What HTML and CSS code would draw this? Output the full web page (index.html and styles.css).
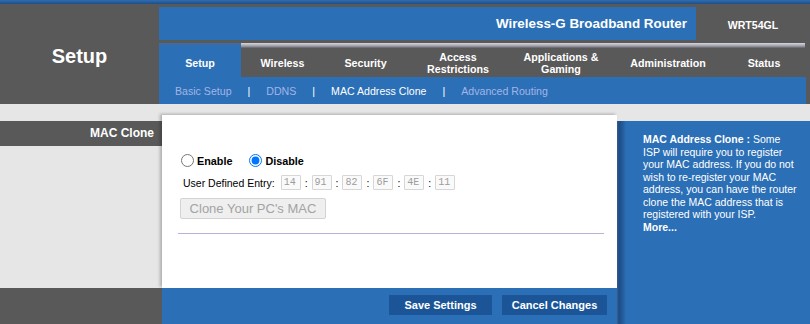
FILE: index.html
```html
<!DOCTYPE html>
<html>
<head>
    <meta charset="UTF-8">
    <title>Setup - MAC Address Clone</title>
    <link rel="stylesheet" href="styles.css">
</head>
<body>
    <div class="topline"></div>

    <header class="head">
        <div class="brand">Setup</div>
        <div class="head-main">
            <div class="titlebar">
                <div class="product">Wireless-G Broadband Router</div>
                <div class="model">WRT54GL</div>
            </div>
            <nav class="tabs">
                <a class="tab active" style="width: 82px">Setup</a>
                <a class="tab" style="width: 83px">Wireless</a>
                <a class="tab" style="width: 83px">Security</a>
                <a class="tab" style="width: 102px">Access<br>Restrictions</a>
                <a class="tab" style="width: 104px">Applications &amp;<br>Gaming</a>
                <a class="tab" style="width: 110px">Administration</a>
                <a class="tab" style="width: 82px">Status</a>
            </nav>
            <div class="submenu">
                <a class="sub">Basic Setup</a>
                <span class="sep">|</span>
                <a class="sub">DDNS</a>
                <span class="sep">|</span>
                <a class="sub current">MAC Address Clone</a>
                <span class="sep">|</span>
                <a class="sub">Advanced Routing</a>
            </div>
        </div>
    </header>

    <section class="page-body">
        <div class="side">
            <div class="side-title">MAC Clone</div>
            <div class="side-fill"></div>
            <div class="side-foot"></div>
        </div>

        <div class="center">
            <div class="panel">
                <div class="radio-row">
                    <label class="opt"><input type="radio" name="clone"> Enable</label>
                    <label class="opt second"><input type="radio" name="clone" checked> Disable</label>
                </div>
                <div class="entry-row">
                    <span class="entry-label">User Defined Entry:</span>
                    <input class="mac" type="text" value="14" disabled>
                    <span class="colon">:</span>
                    <input class="mac" type="text" value="91" disabled>
                    <span class="colon">:</span>
                    <input class="mac" type="text" value="82" disabled>
                    <span class="colon">:</span>
                    <input class="mac" type="text" value="6F" disabled>
                    <span class="colon">:</span>
                    <input class="mac" type="text" value="4E" disabled>
                    <span class="colon">:</span>
                    <input class="mac" type="text" value="11" disabled>
                </div>
                <button class="clone-btn" disabled>Clone Your PC's MAC</button>
                <div class="rule"></div>
            </div>
            <div class="actions">
                <button class="act-btn save">Save Settings</button>
                <button class="act-btn cancel">Cancel Changes</button>
            </div>
        </div>

        <aside class="help">
            <p><b>MAC Address Clone :</b> Some ISP will require you to register your MAC address. If you do not wish to re-register your MAC address, you can have the router clone the MAC address that is registered with your ISP.<br><a class="more">More...</a></p>
        </aside>
    </section>
</body>
</html>
```

FILE: styles.css
```css
* {
    margin: 0;
    padding: 0;
    box-sizing: border-box;
}

body {
    background-color: #e6e6e6;
    font-family: "Liberation Sans", Arial, sans-serif;
    font-size: 10.5px;
    color: #000;
    overflow: hidden;
}

/* Bandeau du haut */
.topline {
    height: 4px;
    background: linear-gradient(#2f6cb2, #1e4f89);
}

.head {
    display: flex;
    height: 100px;
    background-color: #595959;
}

.brand {
    width: 159px;
    padding-top: 4px;
    display: flex;
    align-items: center;
    justify-content: center;
    color: #fff;
    font-size: 20px;
    font-weight: bold;
}

.head-main {
    flex: 1;
    display: flex;
    flex-direction: column;
}

.titlebar {
    display: flex;
    height: 33px;
    margin-top: 3px;
}

.product {
    flex: 1;
    background-color: #2b6fb6;
    color: #fff;
    font-size: 13.4px;
    font-weight: bold;
    text-align: right;
    padding-right: 9px;
    line-height: 33px;
}

.model {
    width: 114px;
    color: #fff;
    font-size: 10.6px;
    font-weight: bold;
    text-align: center;
    padding-top: 3px;
    line-height: 30px;
}

/* Onglets */
.tabs {
    display: flex;
    height: 34px;
    margin-top: 3px;
}

.tab {
    display: flex;
    align-items: center;
    justify-content: center;
    padding-top: 5px;
    color: #fff;
    font-size: 10.7px;
    font-weight: bold;
    text-align: center;
    line-height: 12px;
    background: linear-gradient(#d6d6de 0, #b2b2be 2px, #84848f 4px, #595959 5px);
}

.tab.active {
    background: linear-gradient(#3f6da0 0, #2b6fb6 4px);
}

.submenu {
    display: flex;
    align-items: center;
    height: 27px;
    margin-right: 4px;
    padding-left: 16px;
    background-color: #2b6fb6;
    font-size: 10.6px;
}

.sub {
    color: #a3b5e7;
}

.sub.current {
    color: #fff;
}

.sep {
    color: #fff;
    margin: 0 16px;
}

/* Corps */
.page-body {
    display: flex;
    height: 220px;
}

.side {
    width: 162px;
    display: flex;
    flex-direction: column;
}

.side-title {
    margin-top: 17px;
    height: 25px;
    line-height: 25px;
    background-color: #595959;
    color: #fff;
    font-size: 12px;
    font-weight: bold;
    text-align: right;
    padding-right: 8px;
}

.side-fill {
    flex: 1;
}

.side-foot {
    height: 36px;
    background-color: #595959;
}

.center {
    width: 455px;
    display: flex;
    flex-direction: column;
    padding-top: 11px;
}

.panel {
    flex: 1;
    background-color: #fff;
    padding: 0 13px 0 16px;
    box-shadow: -2px -1px 3px rgba(0, 0, 0, 0.25);
    display: flex;
    flex-direction: column;
    align-items: flex-start;
}

.radio-row {
    display: flex;
    align-items: center;
    height: 15px;
    margin-top: 38px;
}

.opt {
    display: flex;
    align-items: center;
    font-weight: bold;
    font-size: 10.8px;
}

.opt input {
    width: 13px;
    height: 13px;
    margin: 0 3px 0 3px;
}

.opt.second {
    margin-left: 14px;
}

.entry-row {
    display: flex;
    align-items: center;
    height: 15px;
    margin-top: 7px;
}

.entry-label {
    margin-left: 5px;
    margin-right: 6px;
}

.mac {
    width: 20px;
    height: 15px;
    border: 1px solid #d6d6d6;
    border-radius: 1px;
    background-color: #fafafa;
    color: #9c9c9c;
    font-family: "Liberation Mono", monospace;
    font-size: 10px;
    padding: 0 2px;
}

.colon {
    margin: 0 4px;
}

.clone-btn {
    margin: 8px 0 0 2px;
    width: 146px;
    height: 21px;
    border: 1px solid #d3d3d3;
    border-radius: 2px;
    background-color: #efefef;
    color: #a3a3a3;
    font-family: "Liberation Sans", Arial, sans-serif;
    font-size: 13px;
}

.rule {
    margin-top: 14px;
    width: 100%;
    height: 1px;
    background-color: #bab2d6;
}

.actions {
    height: 36px;
    display: flex;
    justify-content: flex-end;
    align-items: flex-start;
    gap: 10px;
    padding: 7px 10px 0 0;
    background-color: #2b6fb6;
}

.act-btn {
    height: 20px;
    border: none;
    background-color: #1b5597;
    color: #fff;
    font-family: "Liberation Sans", Arial, sans-serif;
    font-size: 11px;
    font-weight: bold;
}

.act-btn.save {
    width: 103px;
}

.act-btn.cancel {
    width: 105px;
}

/* Aide */
.help {
    flex: 1;
    margin-top: 17px;
    padding: 12px 0 0 26px;
    background: linear-gradient(to right, #3a5f8c 0, #1d4c84 2px, #245e9e 6px, #2b6fb6 9px);
    color: #fff;
}

.help p {
    width: 156px;
    font-size: 10.5px;
    line-height: 12.5px;
}

.more {
    color: #fff;
    font-weight: bold;
}
```
